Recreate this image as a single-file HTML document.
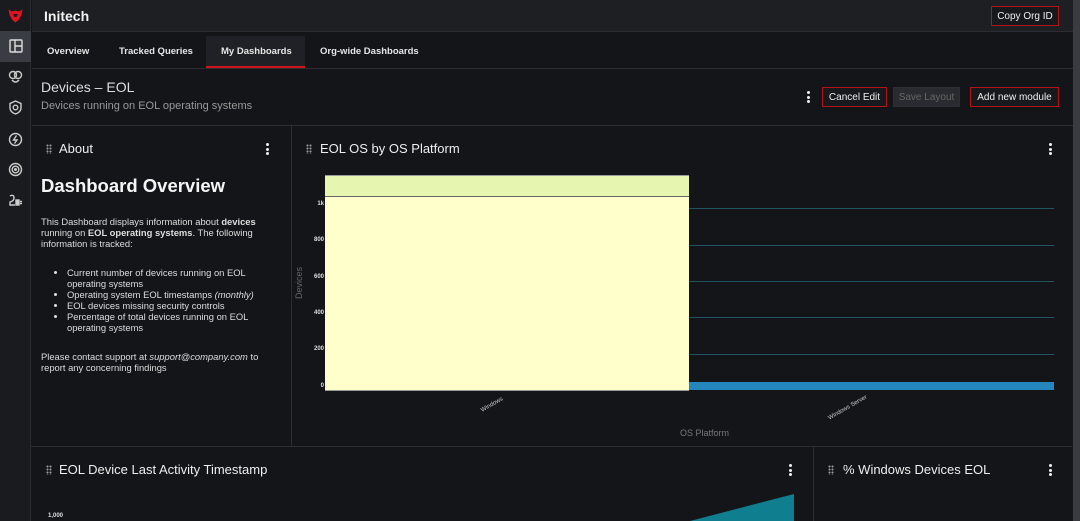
<!DOCTYPE html>
<html><head><style>
*{margin:0;padding:0;box-sizing:border-box}
html,body{width:1080px;height:521px;overflow:hidden}
body{background:#141519;font-family:"Liberation Sans",sans-serif;color:#e6e6e6;position:relative}
.a{position:absolute}
.btn{position:absolute;border:1px solid #b3141c;font-size:10px;color:#eee;display:flex;align-items:center;justify-content:center;background:#18191d}
.dots{position:absolute;width:3px}
.dots i{display:block;width:3px;height:3px;background:#eee;border-radius:50%;margin-bottom:1.5px}
.grip{position:absolute;width:6px;height:10px;background:radial-gradient(circle,#999 0.8px,transparent 1.2px) 0 0/3px 3px}
.gl{position:absolute;left:689px;width:365px;height:1px;background:#1f5460}
.yl{position:absolute;font-size:6px;color:#ddd;font-weight:bold;text-align:right;width:20px}
.tab{position:absolute;top:46px;font-size:9.5px;font-weight:bold;color:#e6e6e6}
</style></head><body>
<div class="a" style="left:0;top:0;width:31px;height:521px;background:#1a1b1f;border-right:1px solid #2a2b30"></div>
<svg class="a" style="left:8px;top:8px" width="15" height="15" viewBox="0 0 15 15"><path d="M0.5 1.5 L4 3.5 L7.5 2.5 L11 3.5 L14.5 1.5 L13.5 7 L10.5 12 L7.5 14.5 L4.5 12 L1.5 7Z" fill="#e0141e"/><path d="M5 6 L10 6 L8.5 9 L6.5 9Z" fill="#1a1b1f"/></svg>
<div class="a" style="left:0;top:31px;width:31px;height:31px;background:#3a3c44"></div>
<svg class="a" style="left:9px;top:39px" width="14" height="14" viewBox="0 0 14 14" fill="none" stroke="#ddd" stroke-width="1.4"><rect x="1" y="1" width="12" height="12" rx="1"/><path d="M6 1V13M6 7H13"/></svg>
<svg class="a" style="left:8px;top:69px" width="15" height="15" viewBox="0 0 15 15" fill="none" stroke="#ccc" stroke-width="1.4"><circle cx="5" cy="6" r="3.5"/><circle cx="10" cy="6" r="3.5"/><path d="M4 11 Q7.5 15 11 11"/></svg>
<svg class="a" style="left:8px;top:100px" width="15" height="15" viewBox="0 0 15 15" fill="none" stroke="#ccc" stroke-width="1.4"><path d="M7.5 1 L13 3.5 V8 Q13 12 7.5 14 Q2 12 2 8 V3.5Z"/><circle cx="7.5" cy="7.5" r="2.3"/></svg>
<svg class="a" style="left:8px;top:132px" width="15" height="15" viewBox="0 0 15 15" fill="none" stroke="#ccc" stroke-width="1.4"><circle cx="7.5" cy="7.5" r="6"/><path d="M8.5 3.5 L5.5 8 H9 L6.5 11.5" /></svg>
<svg class="a" style="left:8px;top:162px" width="15" height="15" viewBox="0 0 15 15" fill="none" stroke="#ccc" stroke-width="1.4"><circle cx="7.5" cy="7.5" r="6"/><circle cx="7.5" cy="7.5" r="3.3"/><circle cx="7.5" cy="7.5" r="0.8" fill="#ccc"/></svg>
<svg class="a" style="left:8px;top:193px" width="15" height="15" viewBox="0 0 15 15" fill="none" stroke="#ccc" stroke-width="1.4"><path d="M2 3 Q6 1 6 5 Q6 8 2 9 V12 H7"/><rect x="8" y="7" width="3" height="5" fill="#ccc"/><path d="M12 8.5H14M12 10.5H14"/></svg>
<div class="a" style="left:32px;top:0;width:1048px;height:32px;background:#1e1f23;border-bottom:1px solid #2c2d32"></div>
<div class="a" style="left:44px;top:8px;font-size:14px;font-weight:bold;color:#f2f2f2">Initech</div>
<div class="btn" style="left:991px;top:6px;width:68px;height:20px;font-size:10px">Copy Org ID</div>
<div class="a" style="left:32px;top:68px;width:1048px;height:1px;background:#2c2d32"></div>
<div class="a" style="left:206px;top:36px;width:99px;height:32px;background:#202126;border-bottom:2px solid #d0141c"></div>
<div class="tab" style="left:47px">Overview</div>
<div class="tab" style="left:119px">Tracked Queries</div>
<div class="tab" style="left:221px">My Dashboards</div>
<div class="tab" style="left:320px">Org-wide Dashboards</div>
<div class="a" style="left:41px;top:79px;font-size:14px;color:#ddd">Devices – EOL</div>
<div class="a" style="left:41px;top:100px;font-size:11px;color:#999">Devices running on EOL operating systems</div>
<div class="dots" style="left:807px;top:91px"><i></i><i></i><i></i></div>
<div class="btn" style="left:822px;top:87px;width:65px;height:20px">Cancel Edit</div>
<div class="btn" style="left:893px;top:87px;width:67px;height:20px;border-color:#2e2f34;background:#2a2b30;color:#666">Save Layout</div>
<div class="btn" style="left:970px;top:87px;width:89px;height:20px">Add new module</div>
<div class="a" style="left:32px;top:125px;width:1048px;height:1px;background:#2c2d32"></div>
<div class="a" style="left:1073px;top:0;width:7px;height:521px;background:#3a3b40"></div>
<div class="a" style="left:291px;top:126px;width:1px;height:320px;background:#2c2d32"></div>
<div class="a" style="left:31px;top:446px;width:1041px;height:1px;background:#2c2d32"></div>
<div class="grip" style="left:46px;top:144px"></div>
<div class="a" style="left:59px;top:141px;font-size:13px;color:#eee">About</div>
<div class="dots" style="left:266px;top:143px"><i></i><i></i><i></i></div>
<div class="a" style="left:41px;top:175px;font-size:18.5px;font-weight:bold;color:#f5f5f5">Dashboard Overview</div>
<div class="a" style="left:41px;top:216px;width:235px;font-size:9.4px;line-height:11px;color:#ddd">This Dashboard displays information about <b>devices</b> running on <b>EOL operating systems</b>. The following information is tracked:</div>
<ul class="a" style="left:67px;top:267px;width:210px;font-size:9.4px;line-height:11px;color:#ddd;list-style:disc">
<li>Current number of devices running on EOL operating systems</li>
<li>Operating system EOL timestamps <i>(monthly)</i></li>
<li>EOL devices missing security controls</li>
<li>Percentage of total devices running on EOL operating systems</li></ul>
<div class="a" style="left:41px;top:351px;width:235px;font-size:9.4px;line-height:11px;color:#ddd">Please contact support at <i>support@company.com</i> to report any concerning findings</div>
<div class="grip" style="left:306px;top:144px"></div>
<div class="a" style="left:320px;top:141px;font-size:13px;color:#eee">EOL OS by OS Platform</div>
<div class="dots" style="left:1049px;top:143px"><i></i><i></i><i></i></div>
<div class="gl" style="top:208px"></div><div class="gl" style="top:245px"></div><div class="gl" style="top:281px"></div><div class="gl" style="top:317px"></div><div class="gl" style="top:354px"></div>
<div class="a" style="left:325px;top:175px;width:364px;height:22px;background:#e6f5b0;border-top:1px solid #999;border-bottom:1px solid #666"></div>
<div class="a" style="left:325px;top:197px;width:364px;height:194px;background:#ffffcc;border-bottom:1px solid #999"></div>
<div class="a" style="left:689px;top:382px;width:365px;height:8px;background:#2585bd"></div>
<div class="yl" style="left:304px;top:201px">1k</div>
<div class="yl" style="left:304px;top:237px">800</div>
<div class="yl" style="left:304px;top:274px">600</div>
<div class="yl" style="left:304px;top:310px">400</div>
<div class="yl" style="left:304px;top:346px">200</div>
<div class="yl" style="left:304px;top:383px">0</div>
<div class="a" style="left:283px;top:278px;font-size:9px;color:#666;transform:rotate(-90deg)">Devices</div>
<div class="a" style="left:480px;top:402px;font-size:6px;color:#ccc;transform:rotate(-30deg)">Windows</div>
<div class="a" style="left:826px;top:405px;font-size:6px;color:#ccc;transform:rotate(-30deg)">Windows Server</div>
<div class="a" style="left:680px;top:428px;font-size:9px;color:#777">OS Platform</div>
<div class="a" style="left:813px;top:447px;width:1px;height:80px;background:#2c2d32"></div>
<div class="grip" style="left:46px;top:465px"></div>
<div class="a" style="left:59px;top:462px;font-size:13px;color:#eee">EOL Device Last Activity Timestamp</div>
<div class="dots" style="left:789px;top:464px"><i></i><i></i><i></i></div>
<div class="grip" style="left:828px;top:465px"></div>
<div class="a" style="left:843px;top:462px;font-size:13px;color:#eee">% Windows Devices EOL</div>
<div class="dots" style="left:1049px;top:464px"><i></i><i></i><i></i></div>
<div class="a" style="left:48px;top:513px;font-size:6px;font-weight:bold;color:#ddd">1,000</div>
<svg class="a" style="left:690px;top:494px" width="104" height="27"><path d="M0 27 L104 0 V27Z" fill="#0f7f8f"/></svg>
</body></html>
